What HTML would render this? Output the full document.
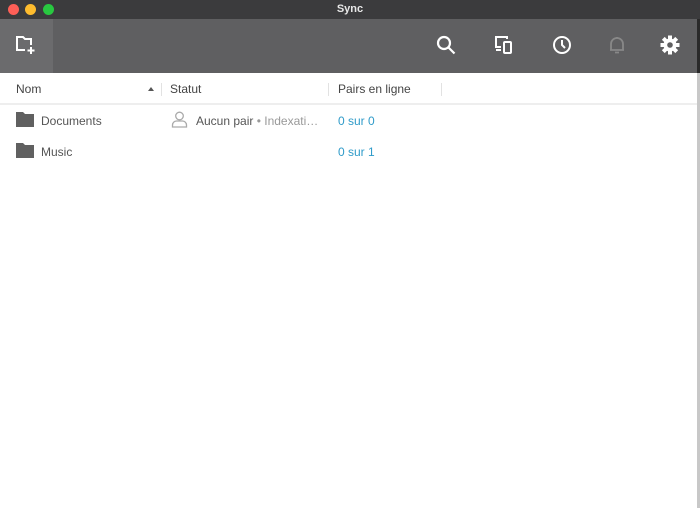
<!DOCTYPE html>
<html><head><style>
*{margin:0;padding:0;box-sizing:border-box}
body{width:700px;height:508px;background:#fff;font-family:"Liberation Sans",sans-serif;position:relative;overflow:hidden}
.title{position:absolute;left:0;top:0;width:700px;height:19px;background:#3b3b3d;color:#e8e8e8;font-size:11px;font-weight:bold;text-align:center;line-height:19px}
.dot{position:absolute;top:4px;width:11px;height:11px;border-radius:50%}
.tb{position:absolute;left:0;top:19px;width:697px;height:54px;background:#5f5f61}
.tbl{position:absolute;left:0;top:19px;width:53px;height:54px;background:#6b6b6d}
.edge{position:absolute;left:697px;top:19px;width:3px;height:489px;background:#c8c8c8}
.edge2{position:absolute;left:697px;top:19px;width:3px;height:54px;background:#2a2a2a}
.ico{position:absolute;top:35px}
.h{position:absolute;top:82px;font-size:12px;color:#444}
.sep{position:absolute;top:83px;width:1px;height:13px;background:#e2e2e2}
.line{position:absolute;left:0;top:103px;width:697px;height:2px;background:#eee}
.t{position:absolute;font-size:12px;color:#555}
.b{position:absolute;font-size:12px;color:#2f9bc9}
.f{position:absolute;left:16px;width:18px;height:15px}
</style></head><body>
<div class="title">Sync</div>
<div class="dot" style="left:8px;background:#fe5f57"></div>
<div class="dot" style="left:25px;background:#febc2e"></div>
<div class="dot" style="left:43px;background:#28c840"></div>
<div class="tb"></div><div class="tbl"></div>
<div class="edge"></div><div class="edge2"></div>
<svg class="ico" style="left:15px" width="22" height="20" viewBox="0 0 22 20" fill="none" stroke="#fff" stroke-width="2"><path d="M10 15H2V2h6l2 2h6v6"/><path d="M16 12v7M12.5 15.5h7"/></svg>
<svg class="ico" style="left:436px" width="20" height="20" viewBox="0 0 20 20" fill="none" stroke="#fff" stroke-width="2.2"><circle cx="8" cy="8" r="6"/><path d="M12.5 12.5l6 6"/></svg>
<svg class="ico" style="left:494px" width="20" height="20" viewBox="0 0 20 20" fill="none" stroke="#fff" stroke-width="2"><path d="M13 4V2H2v10h5M2 15h5"/><rect x="10" y="7" width="7" height="11" rx="1"/></svg>
<svg class="ico" style="left:552px" width="20" height="20" viewBox="0 0 20 20" fill="none" stroke="#fff" stroke-width="2"><circle cx="10" cy="10" r="8"/><path d="M10 5v5l3 3"/></svg>
<svg class="ico" style="left:607px" width="20" height="20" viewBox="0 0 20 20" fill="none" stroke="#888" stroke-width="1.8"><path d="M4 15V9a6 6 0 0112 0v6H4zM3 15h14M8 17.5h4M10 2v1"/></svg>
<svg class="ico" style="left:660px" width="20" height="20" viewBox="0 0 20 20"><g fill="#fff"><circle cx="10" cy="10" r="6.5"/><g id="tt"><rect x="8" y="0.5" width="4" height="4"/><rect x="8" y="15.5" width="4" height="4"/></g><use href="#tt" transform="rotate(45 10 10)"/><use href="#tt" transform="rotate(90 10 10)"/><use href="#tt" transform="rotate(135 10 10)"/></g><circle cx="10" cy="10" r="2.8" fill="#5f5f61"/></svg>
<div class="h" style="left:16px">Nom</div>
<div style="position:absolute;left:148px;top:87px;width:0;height:0;border-left:3.5px solid transparent;border-right:3.5px solid transparent;border-bottom:4px solid #555"></div>
<div class="sep" style="left:161px"></div>
<div class="h" style="left:170px">Statut</div>
<div class="sep" style="left:328px"></div>
<div class="h" style="left:338px">Pairs en ligne</div>
<div class="sep" style="left:441px"></div>
<div class="line"></div>
<svg class="f" style="top:112px" viewBox="0 0 18 15"><path d="M0 0h7l2 2h9v13H0z" fill="#606060"/></svg>
<div class="t" style="left:41px;top:114px">Documents</div>
<svg style="position:absolute;left:171px;top:111px" width="17" height="17" viewBox="0 0 17 17" fill="none" stroke="#aaa" stroke-width="1.3"><circle cx="8.5" cy="5" r="3.8"/><path d="M1.5 16v-2a4 4 0 014-4h6a4 4 0 014 4v2z"/></svg>
<div class="t" style="left:196px;top:114px">Aucun pair <span style="color:#999">• Indexati…</span></div>
<div class="b" style="left:338px;top:114px">0 sur 0</div>
<svg class="f" style="top:143px" viewBox="0 0 18 15"><path d="M0 0h7l2 2h9v13H0z" fill="#606060"/></svg>
<div class="t" style="left:41px;top:145px">Music</div>
<div class="b" style="left:338px;top:145px">0 sur 1</div>
</body></html>
